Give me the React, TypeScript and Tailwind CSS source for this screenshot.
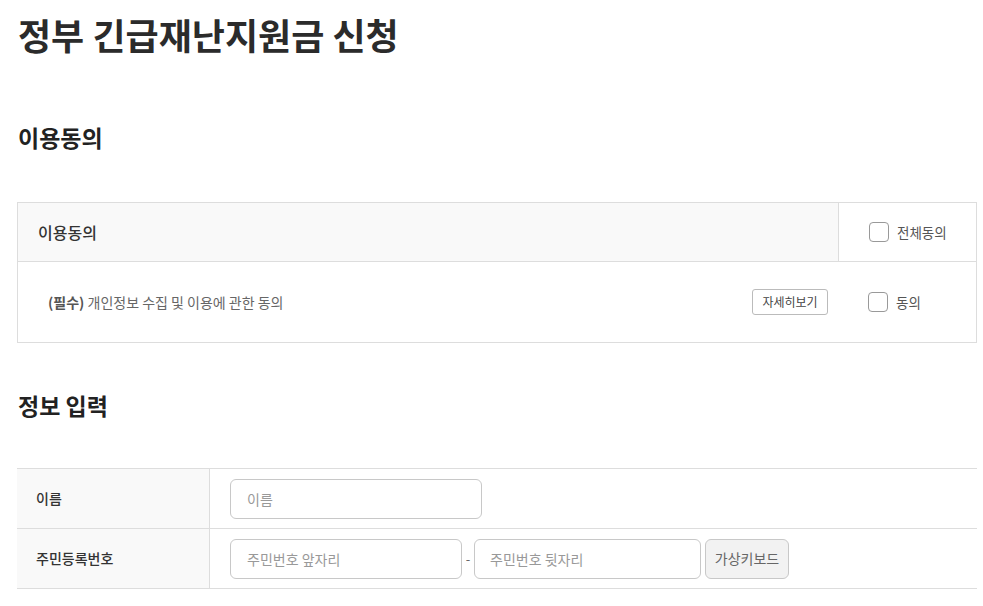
import React from "react";

const font = { fontFamily: '"Noto Sans CJK KR", "Noto Sans", sans-serif' };

function Check({ label }: { label: string }) {
  return (
    <label className="flex items-center gap-[8px] cursor-pointer">
      <span className="w-[20px] h-[20px] rounded-[4px] border border-[#999] bg-white inline-block" />
      <span className="text-[13.5px] text-[#555] leading-[20px]">{label}</span>
    </label>
  );
}

export default function App() {
  return (
    <div className="bg-white min-h-screen text-[#333]" style={font}>
      <div className="ml-[17px] w-[960px]">
        <h1 className="pt-[14px] pl-[1px] text-[36px] leading-[40px] font-bold text-[#2b2b2b]">
          정부 긴급재난지원금 신청
        </h1>

        <h2 className="mt-[68px] pl-[1px] text-[23px] leading-[30px] font-bold text-[#222]">이용동의</h2>

        <div className="mt-[50px] border border-[#dddddd]">
          <div className="flex h-[59px] border-b border-[#dddddd]">
            <div className="flex-1 bg-[#f9f9f9] flex items-center pl-[20px] text-[16px] font-medium text-[#333]">
              이용동의
            </div>
            <div className="w-[138px] border-l border-[#dddddd] flex items-center pl-[30px]">
              <Check label="전체동의" />
            </div>
          </div>
          <div className="flex h-[80px]">
            <div className="flex-1 flex items-center pl-[30px] pr-[10px]">
              <span className="text-[14px] text-[#666]">
                <span className="font-bold text-[#555]">(필수)</span> 개인정보 수집 및 이용에 관한 동의
              </span>
              <button className="ml-auto h-[26px] w-[76px] border border-[#bbb] rounded-[3px] bg-white text-[12px] text-[#444]">
                자세히보기
              </button>
            </div>
            <div className="w-[138px] flex items-center pl-[30px]">
              <Check label="동의" />
            </div>
          </div>
        </div>

        <h2 className="mt-[47px] pl-[1px] text-[23px] leading-[30px] font-bold text-[#222]">정보 입력</h2>

        <div className="mt-[48px] border-t border-[#dddddd]">
          <div className="flex h-[60px] border-b border-[#dddddd]">
            <div className="w-[193px] bg-[#f9f9f9] border-r border-[#dddddd] flex items-center pl-[19px] text-[14px] font-medium text-[#333]">
              이름
            </div>
            <div className="flex-1 flex items-center pl-[20px]">
              <input
                placeholder="이름"
                className="w-[252px] h-[40px] border border-[#c8c8c8] rounded-[6px] px-[16px] text-[14px] placeholder:text-[#999] outline-none"
                style={font}
              />
            </div>
          </div>
          <div className="flex h-[60px] border-b border-[#dddddd]">
            <div className="w-[193px] bg-[#f9f9f9] border-r border-[#dddddd] flex items-center pl-[19px] text-[14px] font-medium text-[#333]">
              주민등록번호
            </div>
            <div className="flex-1 flex items-center pl-[20px]">
              <input
                placeholder="주민번호 앞자리"
                className="w-[232px] h-[40px] border border-[#c8c8c8] rounded-[6px] px-[16px] text-[14px] placeholder:text-[#999] outline-none"
                style={font}
              />
              <span className="w-[12px] text-center text-[13px] text-[#666]">-</span>
              <input
                placeholder="주민번호 뒷자리"
                className="w-[227px] h-[40px] border border-[#c8c8c8] rounded-[6px] px-[15px] text-[14px] placeholder:text-[#999] outline-none"
                style={font}
              />
              <button
                className="ml-[4px] w-[84px] h-[40px] border border-[#c8c8c8] rounded-[6px] bg-[#f2f2f2] text-[14px] text-[#666]"
                style={font}
              >
                가상키보드
              </button>
            </div>
          </div>
        </div>
      </div>
    </div>
  );
}
